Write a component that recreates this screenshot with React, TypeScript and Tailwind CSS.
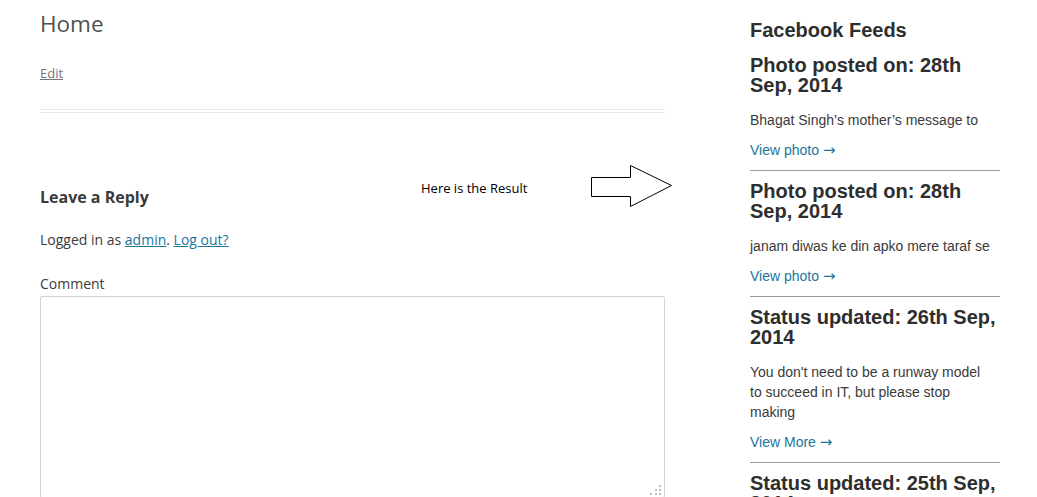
import React from "react";

const feeds = [
  {
    title: "Photo posted on: 28th Sep, 2014",
    body: "Bhagat Singh’s mother’s message to",
    link: "View photo",
  },
  {
    title: "Photo posted on: 28th Sep, 2014",
    body: "janam diwas ke din apko mere taraf se",
    link: "View photo",
  },
  {
    title: "Status updated: 26th Sep, 2014",
    body: "You don't need to be a runway model to succeed in IT, but please stop making",
    link: "View More",
  },
  {
    title: "Status updated: 25th Sep, 2014",
    body: "",
    link: "",
  },
];

function ResizeGrip() {
  // dotted grip in the corner of the textarea
  const dots = [
    [9, 0],
    [5, 4],
    [9, 4],
    [0, 8],
    [5, 8],
    [9, 8],
  ];
  return (
    <svg width="12" height="11" className="absolute right-[2px] bottom-[1px]">
      {dots.map(([x, y], i) => (
        <rect key={i} x={x} y={y} width="2" height="2" fill="#bdbdbd" />
      ))}
    </svg>
  );
}

export default function App() {
  return (
    <div className="relative w-[1037px] h-[497px] overflow-hidden bg-white">
      <div className="flex">
        {/* main content column */}
        <div className="ml-[40px] w-[625px] flex flex-col" style={{ fontFamily: '"Open Sans", sans-serif' }}>
          <h1 className="mt-[8px] text-[22.5px] leading-[32px] text-[#505050] font-normal">Home</h1>
          <a className="mt-[25px] text-[13px] leading-[16px] text-[#777] underline w-fit">Edit</a>
          <div className="mt-[28px] border-t border-b border-[#e8e8e8] h-[4px]" />
          <h3 className="mt-[73px] text-[16px] leading-[22px] font-bold text-[#3a3a3a]">Leave a Reply</h3>
          <p className="mt-[22px] text-[14px] leading-[20px] text-[#3a3a3a]">
            Logged in as <a className="text-[#21759b] underline">admin</a>.{" "}
            <a className="text-[#21759b] underline">Log out?</a>
          </p>
          <label className="mt-[24px] text-[14px] leading-[20px] text-[#3a3a3a]">Comment</label>
          <div className="relative mt-[2px] h-[202px] border border-[#d4d4d4] rounded-[2px]">
            <ResizeGrip />
          </div>
        </div>

        {/* sidebar */}
        <div className="ml-[85px] w-[250px] flex flex-col" style={{ fontFamily: '"Liberation Sans", Arial, sans-serif' }}>
          <h2 className="mt-[18px] text-[20px] leading-[24px] font-bold text-[#2e2e2e]">Facebook Feeds</h2>
          {feeds.map((f, i) => (
            <div key={i} className={i === 0 ? "mt-[13px]" : "mt-[10px] border-t border-[#999] pt-[10px]"}>
              <h3 className="text-[20px] leading-[20px] font-bold text-[#2e2e2e]">{f.title}</h3>
              {f.body && (
                <p className="mt-[15px] pr-[8px] text-[14px] leading-[20px] text-[#3a3a3a]">{f.body}</p>
              )}
              {f.link && (
                <a className="block h-[20px] mt-[10px] text-[14px] leading-[20px] text-[#21759b]">
                  {f.link}{" "}
                  <span style={{ fontFamily: '"DejaVu Sans", sans-serif' }} className="text-[15px] leading-none">
                    →
                  </span>
                </a>
              )}
            </div>
          ))}
        </div>
      </div>

      {/* annotation */}
      <span
        className="absolute left-[421px] top-[180px] text-[13px] leading-[16px] text-black"
        style={{ fontFamily: '"Open Sans", sans-serif' }}
      >
        Here is the Result
      </span>
      <svg className="absolute left-[589px] top-[163px]" width="86" height="46">
        <path d="M2.5 14.5 H41.5 V2.5 L82.5 22.5 L41.5 43.5 V33.5 H2.5 Z" fill="white" stroke="black" strokeWidth="1" />
      </svg>
    </div>
  );
}
